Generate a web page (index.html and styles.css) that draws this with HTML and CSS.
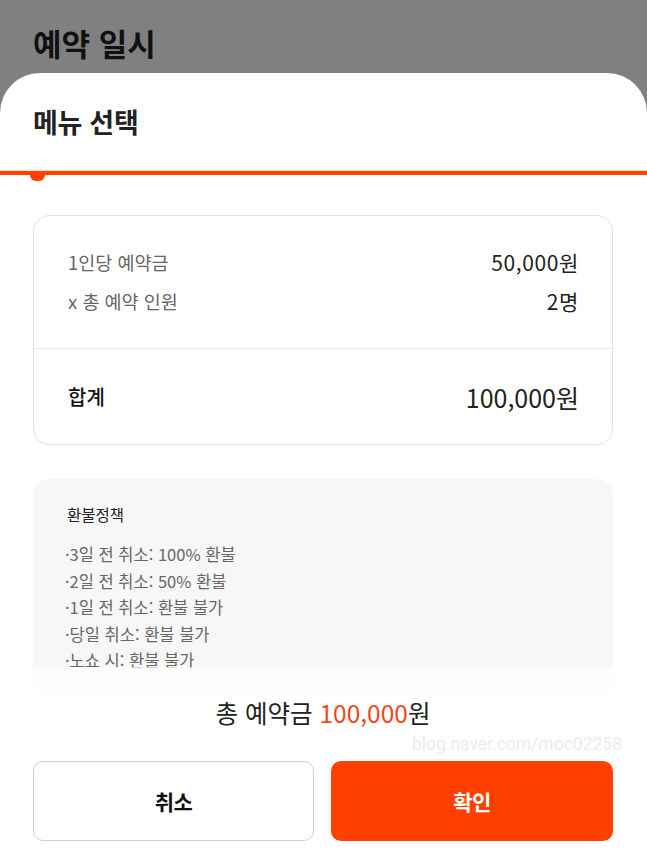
FILE: index.html
```html
<!DOCTYPE html>
<html lang="ko">
<head>
<meta charset="utf-8">
<title>메뉴 선택</title>
<link rel="stylesheet" href="styles.css">
</head>
<body>
<div class="screen">
  <div class="top">
    <h1 class="top-title">예약 일시</h1>
  </div>
  <div class="sheet">
    <div class="sheet-header">
      <h2 class="sheet-title">메뉴 선택</h2>
    </div>
    <div class="progress">
      <span class="thumb"></span>
    </div>
    <div class="content">
      <div class="summary">
        <div class="summary-top">
          <div class="row">
            <span class="label">1인당 예약금</span>
            <span class="value">50,000원</span>
          </div>
          <div class="row">
            <span class="label">x 총 예약 인원</span>
            <span class="value">2명</span>
          </div>
        </div>
        <div class="summary-total">
          <span class="total-label">합계</span>
          <span class="total-value">100,000원</span>
        </div>
      </div>
      <div class="refund">
        <div class="refund-title">환불정책</div>
        <ul class="refund-list">
          <li>·3일 전 취소: 100% 환불</li>
          <li>·2일 전 취소: 50% 환불</li>
          <li>·1일 전 취소: 환불 불가</li>
          <li>·당일 취소: 환불 불가</li>
          <li>·노쇼 시: 환불 불가</li>
        </ul>
      </div>
    </div>
    <div class="footer">
      <div class="grand-total">총 예약금 <span class="accent">100,000</span>원</div>
      <div class="watermark">blog.naver.com/moc02258</div>
      <div class="buttons">
        <button class="btn btn-cancel">취소</button>
        <button class="btn btn-ok">확인</button>
      </div>
    </div>
  </div>
</div>
</body>
</html>
```
FILE: styles.css
```css
* { box-sizing: border-box; }
html, body { margin: 0; padding: 0; }
body {
  width: 647px;
  height: 864px;
  overflow: hidden;
  background: #808080;
  font-family: "Noto Sans CJK KR", "Noto Sans", sans-serif;
  color: #222;
}
.screen {
  width: 647px;
  height: 864px;
  display: flex;
  flex-direction: column;
}
.top {
  height: 73px;
  padding: 21px 33px 0;
}
.top-title {
  margin: 0;
  font-size: 31px;
  line-height: 43px;
  font-weight: 700;
  color: #111;
  letter-spacing: 0;
}
.sheet {
  position: relative;
  flex: 1;
  background: #fff;
  border-radius: 40px 40px 0 0;
  overflow: hidden;
}
.sheet-header {
  height: 98px;
  display: flex;
  align-items: center;
  padding: 0 33px;
}
.sheet-title {
  margin: 0;
  font-size: 27px;
  font-weight: 700;
  color: #222;
  letter-spacing: -0.3px;
  line-height: 36px;
}
.progress {
  position: relative;
  height: 4px;
  background: #ff4000;
  box-shadow: 0 -1px 2px rgba(255, 64, 0, 0.25);
}
.thumb {
  position: absolute;
  left: 30px;
  top: 4px;
  width: 15px;
  height: 6px;
  background: #ff4000;
  border-radius: 0 0 8px 8px;
}
.content {
  padding: 40px 34px 0 33px;
}
.summary {
  border: 1px solid #e3e3e3;
  border-radius: 16px;
}
.summary-top {
  padding: 31px 33px 32px 34px;
  border-bottom: 1px solid #e6e6e6;
  display: flex;
  flex-direction: column;
  gap: 9px;
}
.row {
  display: flex;
  justify-content: space-between;
  align-items: center;
  height: 30px;
}
.label {
  font-size: 18.5px;
  color: #666;
  letter-spacing: 0;
}
.value {
  font-size: 21px;
  color: #222;
  letter-spacing: 0.6px;
}
.summary-total {
  height: 95px;
  padding: 0 33px 0 34px;
  display: flex;
  justify-content: space-between;
  align-items: center;
}
.total-label {
  font-size: 20px;
  font-weight: 500;
  color: #111;
  letter-spacing: 0;
}
.total-value {
  font-size: 25px;
  color: #222;
  letter-spacing: 0;
}
.refund {
  margin-top: 34px;
  background: #f7f7f7;
  border-radius: 16px;
  padding: 23px 34px 40px;
}
.refund-title {
  font-size: 15.5px;
  line-height: 24px;
  color: #222;
  letter-spacing: 0;
}
.refund-list {
  list-style: none;
  margin: 15px 0 0;
  padding: 0;
  font-size: 16.5px;
  line-height: 26.5px;
  color: #666;
  letter-spacing: 0;
}
.refund-list li {
  margin-left: -2px;
}
.footer {
  position: absolute;
  left: 0;
  right: 0;
  bottom: 0;
  height: 197px;
  padding: 29px 34px 23px 33px;
  background: linear-gradient(rgba(255, 255, 255, 0.7), #fff 34px);
  display: flex;
  flex-direction: column;
}
.grand-total {
  text-align: center;
  font-size: 24.5px;
  line-height: 34px;
  color: #222;
  letter-spacing: 0;
}
.accent {
  color: #f2461a;
}
.watermark {
  position: absolute;
  right: 25px;
  top: 67px;
  font-family: "Roboto", "Liberation Sans", sans-serif;
  font-size: 17.5px;
  color: #ececec;
  letter-spacing: 0;
}
.buttons {
  margin-top: auto;
  display: grid;
  grid-template-columns: 281px 282px;
  gap: 17px;
}
.btn {
  height: 80px;
  border-radius: 10px;
  font-family: "Noto Sans CJK KR", sans-serif;
  font-size: 21px;
  font-weight: 700;
  letter-spacing: -0.6px;
}
.btn-cancel {
  background: #fff;
  border: 1px solid #cfcfcf;
  color: #111;
}
.btn-ok {
  background: #ff4000;
  border: none;
  color: #fff;
}
```
